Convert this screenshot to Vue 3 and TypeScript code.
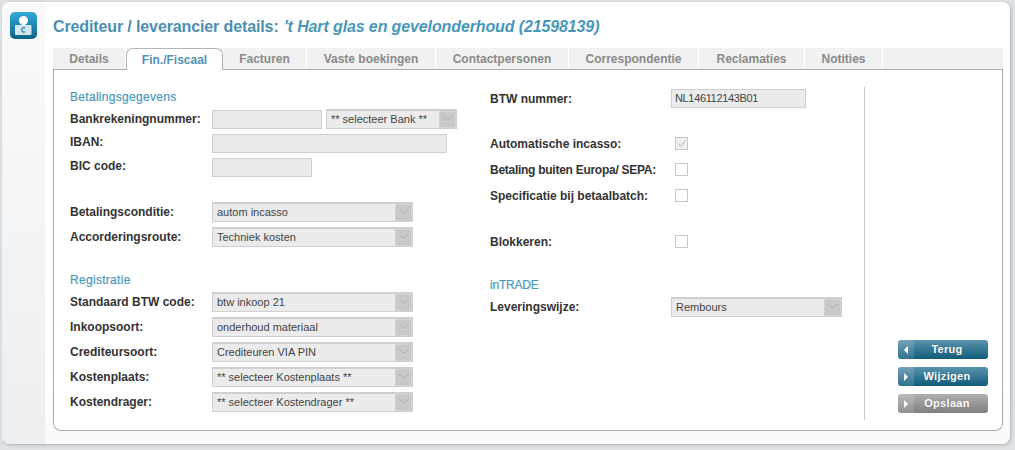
<script setup lang="ts">
const tabs = [
  { label: 'Details', width: 73 },
  { label: 'Fin./Fiscaal', width: 97, active: true },
  { label: 'Facturen', width: 84 },
  { label: 'Vaste boekingen', width: 129 },
  { label: 'Contactpersonen', width: 133 },
  { label: 'Correspondentie', width: 130 },
  { label: 'Reclamaties', width: 106 },
  { label: 'Notities', width: 78 },
]

const paymentSelects = [
  { label: 'Betalingsconditie:', value: 'autom incasso' },
  { label: 'Accorderingsroute:', value: 'Techniek kosten' },
]

const registerSelects = [
  { label: 'Standaard BTW code:', value: 'btw inkoop 21' },
  { label: 'Inkoopsoort:', value: 'onderhoud materiaal' },
  { label: 'Crediteursoort:', value: 'Crediteuren VIA PIN' },
  { label: 'Kostenplaats:', value: '** selecteer Kostenplaats **' },
  { label: 'Kostendrager:', value: '** selecteer Kostendrager **' },
]

const buttons = [
  { label: 'Terug', dir: 'tri-left', tone: 'blue' },
  { label: 'Wijzigen', dir: 'tri-right', tone: 'blue' },
  { label: 'Opslaan', dir: 'tri-right', tone: 'grey' },
]
</script>

<template>
  <div class="page">
    <div class="card">
      <aside class="side">
        <svg class="logo" width="27" height="27" viewBox="0 0 27 27">
          <defs>
            <linearGradient id="lg" x1="0" y1="0" x2="0" y2="1">
              <stop offset="0" stop-color="#35a9dd" />
              <stop offset="1" stop-color="#0b6484" />
            </linearGradient>
          </defs>
          <rect width="27" height="27" rx="5" fill="url(#lg)" />
          <circle cx="13.5" cy="8.5" r="4.5" fill="#fff" />
          <rect x="5" y="13" width="16.5" height="10" rx="1" fill="#d3e6ee" />
          <path d="M15 15.9c-2-.9-3.2.2-3.2 1.9s1.2 2.8 3.2 1.9" fill="none" stroke="#1a7ea6" stroke-width="1.2" />
        </svg>
      </aside>
      <main class="main">
        <h1 class="title">Crediteur / leverancier details: <em>'t Hart glas en gevelonderhoud (21598139)</em></h1>

        <nav class="tabs">
          <div
            v-for="tab in tabs"
            :key="tab.label"
            :class="['tab', { active: tab.active }]"
            :style="{ width: tab.width + 'px' }"
          >{{ tab.label }}</div>
        </nav>

        <section class="panel">
          <div class="col col-left">
            <h2 class="heading">Betalingsgegevens</h2>
            <div class="row bank">
              <label>Bankrekeningnummer:</label>
              <div class="input w110"></div>
              <div class="select w131">
                <span class="value">** selecteer Bank **</span>
                <span class="arrow"><svg width="11" height="7" viewBox="0 0 11 7"><path d="M1 1.5l4.5 4.5L10 1.5" fill="none" stroke="#dedede" /><path d="M1 .5l4.5 4.5L10 .5" fill="none" stroke="#a6a6a6" /></svg></span>
              </div>
            </div>
            <div class="row iban">
              <label class="raised">IBAN:</label>
              <div class="input w235"></div>
            </div>
            <div class="row bic">
              <label class="raised">BIC code:</label>
              <div class="input w100"></div>
            </div>

            <div class="group pay">
              <div v-for="item in paymentSelects" :key="item.label" class="row sel">
                <label>{{ item.label }}</label>
                <div class="select w201">
                  <span class="value">{{ item.value }}</span>
                  <span class="arrow"><svg width="11" height="7" viewBox="0 0 11 7"><path d="M1 1.5l4.5 4.5L10 1.5" fill="none" stroke="#dedede" /><path d="M1 .5l4.5 4.5L10 .5" fill="none" stroke="#a6a6a6" /></svg></span>
                </div>
              </div>
            </div>

            <h2 class="heading reg">Registratie</h2>
            <div class="group reglist">
              <div v-for="item in registerSelects" :key="item.label" class="row sel">
                <label>{{ item.label }}</label>
                <div class="select w201">
                  <span class="value">{{ item.value }}</span>
                  <span class="arrow"><svg width="11" height="7" viewBox="0 0 11 7"><path d="M1 1.5l4.5 4.5L10 1.5" fill="none" stroke="#dedede" /><path d="M1 .5l4.5 4.5L10 .5" fill="none" stroke="#a6a6a6" /></svg></span>
                </div>
              </div>
            </div>
          </div>

          <div class="col col-right">
            <div class="row btw">
              <label>BTW nummer:</label>
              <div class="input w135 filled">NL146112143B01</div>
            </div>
            <div class="row check first">
              <label>Automatische incasso:</label>
              <span class="box on"><svg width="11" height="11" viewBox="0 0 11 11"><path d="M2 5.5l2.5 3L9.5 2" fill="none" stroke="#b4b4b4" /></svg></span>
            </div>
            <div class="row check">
              <label class="tight">Betaling buiten Europa/ SEPA:</label>
              <span class="box"></span>
            </div>
            <div class="row check">
              <label>Specificatie bij betaalbatch:</label>
              <span class="box"></span>
            </div>
            <div class="row check block">
              <label>Blokkeren:</label>
              <span class="box"></span>
            </div>
            <h2 class="heading trade">inTRADE</h2>
            <div class="row lever">
              <label>Leveringswijze:</label>
              <div class="select w171">
                <span class="value">Rembours</span>
                <span class="arrow"><svg width="11" height="7" viewBox="0 0 11 7"><path d="M1 1.5l4.5 4.5L10 1.5" fill="none" stroke="#dedede" /><path d="M1 .5l4.5 4.5L10 .5" fill="none" stroke="#a6a6a6" /></svg></span>
              </div>
            </div>
          </div>

          <div class="actions">
            <button v-for="btn in buttons" :key="btn.label" :class="['btn', btn.tone]" type="button">
              <span class="cap"><span :class="['tri', btn.dir]"></span></span>
              <span class="text">{{ btn.label }}</span>
            </button>
          </div>
        </section>
      </main>
    </div>
  </div>
</template>

<style>
html,
body {
  margin: 0;
  background: #dfe2e4;
}
</style>

<style scoped>
.page {
  width: 1015px;
  height: 450px;
  box-sizing: border-box;
  padding: 2px 5px 6px 2px;
  font-family: "Liberation Sans", Arial, sans-serif;
  overflow: hidden;
}

.card {
  display: flex;
  height: 442px;
  border-radius: 8px;
  overflow: hidden;
  background: #fff;
  box-shadow: 1px 1px 3px rgba(120, 125, 130, 0.5);
}

.side {
  width: 43px;
  flex: none;
  padding: 10px 0 0 8px;
  box-sizing: border-box;
  background: linear-gradient(#fafafa, #eceef0);
}

.logo {
  display: block;
}

.main {
  flex: 1;
  padding: 0 7px 0 8px;
  background: linear-gradient(#fff 380px, #f9f9f9);
}

.title {
  margin: 0;
  padding-top: 16px;
  height: 30px;
  font-size: 16px;
  line-height: 18px;
  font-weight: bold;
  letter-spacing: -0.12px;
  color: #4b8fb0;
  white-space: nowrap;
}

.title em {
  margin-left: 1px;
  font-style: italic;
  color: #4897b8;
}

.tabs {
  display: flex;
  height: 21px;
  background: #f1f1f1;
  border-bottom: 1px solid #ababab;
}

.tab {
  box-sizing: border-box;
  height: 21px;
  line-height: 22px;
  text-align: center;
  font-size: 12px;
  font-weight: bold;
  color: #8a8a8a;
  border-right: 1px solid #fff;
  flex: none;
}

.tab.active {
  background: #fff;
  color: #4f93b5;
  border: 1px solid #b4b4b4;
  border-bottom: 0;
  border-radius: 7px 7px 0 0;
  line-height: 22px;
  height: 22px;
  position: relative;
}

.panel {
  display: flex;
  height: 361px;
  box-sizing: border-box;
  background: #fff;
  border: 1px solid #ababab;
  border-top: 0;
  border-radius: 0 0 8px 8px;
  padding: 0 0 0 16px;
}

.col {
  display: flex;
  flex-direction: column;
  flex: none;
}

.col-left {
  width: 420px;
  padding-top: 20px;
}

.col-right {
  width: 375px;
  height: 333px;
  margin-top: 17px;
  padding-top: 2px;
  border-right: 1px solid #c8c8c8;
  box-sizing: border-box;
}

.heading {
  margin: 0;
  font-size: 12px;
  line-height: 14px;
  font-weight: normal;
  letter-spacing: 0.3px;
  -webkit-text-stroke: 0.2px #4a97bd;
  color: #4a97bd;
}

.row {
  display: flex;
  align-items: center;
}

.row label {
  width: 142px;
  flex: none;
  font-size: 12px;
  font-weight: bold;
  color: #333;
  white-space: nowrap;
}

.row label.raised {
  margin-bottom: 4px;
}

.row label.tight {
  letter-spacing: -0.27px;
}

.input,
.select {
  box-sizing: border-box;
  background: #ebebeb;
  border: 1px solid #cfcfcf;
  font-size: 11px;
  color: #444;
  flex: none;
}

.input {
  height: 19px;
}

.select {
  display: flex;
  height: 20px;
  border-width: 2px 1px 1px;
}

.value {
  flex: 1;
  padding-left: 4px;
  line-height: 16px;
  white-space: nowrap;
  overflow: hidden;
}

.arrow {
  width: 17px;
  flex: none;
  background: #c8c8c8;
  border: 1px solid #d2d2d2;
  box-sizing: border-box;
  display: flex;
  align-items: center;
  justify-content: center;
}

.w100 { width: 100px; }
.w110 { width: 110px; }
.w131 { width: 131px; }
.w135 { width: 135px; }
.w171 { width: 171px; }
.w201 { width: 201px; }
.w235 { width: 235px; }

.bank {
  margin-top: 5px;
  align-items: flex-end;
}

.bank label {
  align-self: center;
}

.bank .select {
  margin-left: 4px;
}

.iban,
.bic {
  margin-top: 5px;
}

.pay {
  margin-top: 25px;
}

.sel {
  margin-bottom: 5px;
}

.reg {
  margin-top: 21px;
}

.reglist {
  margin-top: 5px;
}

.btw {
  height: 19px;
}

.btw label,
.check label,
.lever label {
  width: 181px;
}

.filled {
  padding-left: 3px;
  line-height: 17px;
  letter-spacing: -0.35px;
}

.check {
  height: 13px;
  margin-top: 13px;
}

.check.first {
  margin-top: 29px;
}

.check.block {
  margin-top: 33px;
}

.box {
  box-sizing: border-box;
  width: 13px;
  height: 13px;
  margin-left: 4px;
  border: 1px solid #c8c8c8;
  background: #fff;
  display: block;
  flex: none;
}

.box.on {
  background: #f0f0f0;
}

.box svg {
  display: block;
}

.trade {
  margin-top: 30px;
  letter-spacing: -0.2px;
}

.lever {
  margin-top: 5px;
}

.actions {
  width: 90px;
  margin: 270px 0 0 33px;
  display: flex;
  flex-direction: column;
  gap: 8px;
}

.btn {
  display: flex;
  align-items: stretch;
  width: 90px;
  height: 19px;
  padding: 0;
  border: 0;
  border-radius: 3px;
  overflow: hidden;
  font-family: inherit;
  font-size: 11px;
  font-weight: bold;
  color: #fff;
  letter-spacing: 0.3px;
  text-shadow: 0 0 1px rgba(0, 0, 0, 0.3);
}

.btn.blue {
  background: linear-gradient(#5b93ae, #0f5c7a);
}

.btn.grey {
  background: linear-gradient(#b0b0b0, #7f7f7f);
}

.cap {
  width: 16px;
  flex: none;
  display: flex;
  align-items: center;
  justify-content: center;
  background: rgba(255, 255, 255, 0.14);
}

.tri {
  width: 0;
  height: 0;
  border-top: 4px solid transparent;
  border-bottom: 4px solid transparent;
}

.tri-left {
  border-right: 4px solid #fff;
}

.tri-right {
  border-left: 4px solid #fff;
}

.text {
  flex: 1;
  padding-right: 8px;
  line-height: 18px;
  text-align: center;
}
</style>
